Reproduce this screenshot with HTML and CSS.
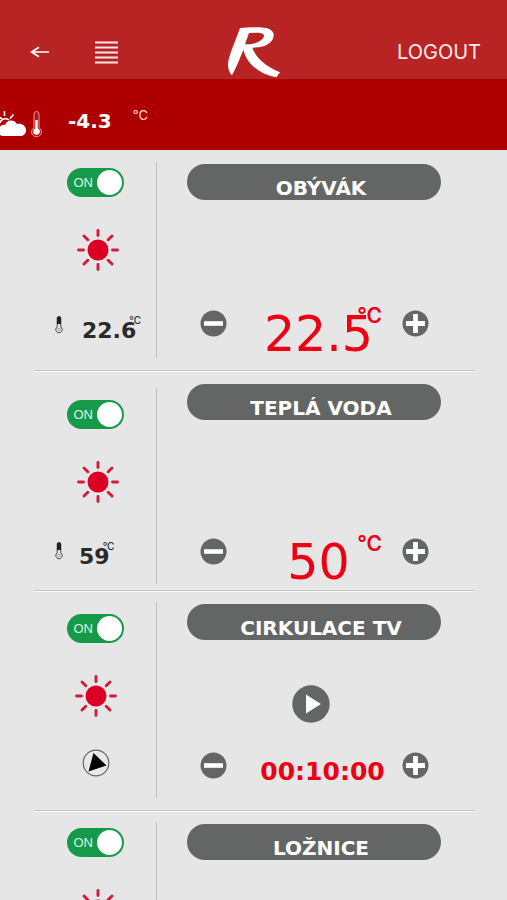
FILE: index.html
```html
<!DOCTYPE html>
<html lang="cs">
<head>
<meta charset="utf-8">
<meta name="viewport" content="width=device-width, initial-scale=1">
<title>Regulace</title>
<link rel="stylesheet" href="styles.css">
</head>
<body>
<svg class="defs" aria-hidden="true">
  <symbol id="sun" viewBox="0 0 42 42">
    <circle cx="21" cy="21" r="10.500" fill="#dc0024"/>
    <path d="M21 1.500v5M21 35.500v5M1.500 21h5M35.500 21h5M7 7l3.800 3.800M31.200 31.200l3.800 3.800M35 7l-3.800 3.800M10.800 31.200l-3.800 3.800" stroke="#d21a3a" stroke-width="2.900" stroke-linecap="round"/>
  </symbol>
  <symbol id="thermo" viewBox="0 0 8 18">
    <path d="M2.200 2.200a1.800 1.800 0 0 1 3.600 0v8.800a3.200 3.200 0 1 1-3.600 0z" fill="#e6e6e6" stroke="#444" stroke-width="1"/>
    <path d="M2 1h4v7h-4z" fill="#222"/>
    <circle cx="4" cy="13.600" r="1.300" fill="#eee" stroke="#777" stroke-width=".6"/>
  </symbol>
  <symbol id="minus" viewBox="0 0 27 27">
    <circle cx="13.500" cy="13.500" r="13" fill="#646666"/>
    <path d="M4 13.500h19" stroke="#fff" stroke-width="4.600"/>
  </symbol>
  <symbol id="plus" viewBox="0 0 27 27">
    <circle cx="13.500" cy="13.500" r="13" fill="#646666"/>
    <path d="M4 13.500h19M13.500 4v19" stroke="#fff" stroke-width="4.800"/>
  </symbol>
</svg>

<header class="topbar">
  <nav class="topbar-nav">
    <button class="icon-btn" aria-label="Zpět">
      <svg width="20" height="12" viewBox="0 0 20 12" fill="none" stroke="#fff" stroke-width="1.700"><path d="M19 6H2M9 1.200L1.500 6 9 10.800"/></svg>
    </button>
    <button class="icon-btn" aria-label="Menu">
      <svg width="23" height="23" viewBox="0 0 23 23" stroke="#ffe6e6" stroke-width="1.800"><path d="M0 1.500h23M0 6.500h23M0 11.500h23M0 16.500h23M0 21.500h23"/></svg>
    </button>
  </nav>
  <svg class="logo" width="54" height="52" viewBox="82 77 162 156" fill="#fff" role="img" aria-label="Logo">
    <path d="M121 83C142 81 172 80 192 82C213 84 223 93 222 106C220 124 203 137 176 141L158 142C167 168 190 194 241 216L230 231C178 220 141 190 131 148C122 172 111 198 97 225C87 216 83 200 86 182C94 150 108 120 121 83ZM148 98L136 132C160 133 184 126 192 111C196 101 188 97 172 97Z" fill-rule="evenodd"/>
  </svg>
  <a class="logout" href="#">LOGOUT</a>
</header>

<section class="weather">
  <svg width="44" height="28" viewBox="0 0 44 28" fill="none">
    <path d="M4.500 1v5M13.500 4.500l-3.500 4M0 7.500l2 1.500M0 13a5.500 5.500 0 0 1 9-3" stroke="#fff" stroke-width="1.600"/>
    <path d="M0 17c1-2 3-2.500 5-2 1.500-5 9-6.500 12-1 5-1 9 2 9 6s-2.500 6-6 6H4c-2 0-3.500-.5-4-1z" fill="#fff"/>
    <path d="M34 4a2.500 2.500 0 0 1 5 0v13.500a5 5 0 1 1-5 0z" fill="#b41414" stroke="#e69696" stroke-width="1"/>
    <path d="M36.500 10v11" stroke="#fff" stroke-width="2.400"/>
    <circle cx="36.500" cy="21.500" r="3.300" fill="#fff"/>
  </svg>
  <span class="outdoor">-4.3</span>
  <span class="outdoor-unit">°C</span>
</section>

<main class="zones">
  <article class="zone zone-room">
    <div class="side">
      <label class="switch"><input type="checkbox" role="switch" aria-label="Obývák" checked><span>ON</span></label>
      <svg class="sun"><use href="#sun"/></svg>
      <div class="reading"><svg class="thermo"><use href="#thermo"/></svg><span class="now">22.6</span><span class="now-unit">°C</span></div>
    </div>
    <div class="control">
      <h2 class="title">OBÝVÁK</h2>
      <div class="stepper">
        <button class="icon-btn" aria-label="Ubrat"><svg class="round"><use href="#minus"/></svg></button>
        <output class="value">22.5<span class="unit">°C</span></output>
        <button class="icon-btn" aria-label="Přidat"><svg class="round"><use href="#plus"/></svg></button>
      </div>
    </div>
  </article>

  <article class="zone zone-water">
    <div class="side">
      <label class="switch"><input type="checkbox" role="switch" aria-label="Teplá voda" checked><span>ON</span></label>
      <svg class="sun"><use href="#sun"/></svg>
      <div class="reading"><svg class="thermo"><use href="#thermo"/></svg><span class="now">59</span><span class="now-unit">°C</span></div>
    </div>
    <div class="control">
      <h2 class="title">TEPLÁ VODA</h2>
      <div class="stepper">
        <button class="icon-btn" aria-label="Ubrat"><svg class="round"><use href="#minus"/></svg></button>
        <output class="value">50<span class="unit">°C</span></output>
        <button class="icon-btn" aria-label="Přidat"><svg class="round"><use href="#plus"/></svg></button>
      </div>
    </div>
  </article>

  <article class="zone zone-pump">
    <div class="side">
      <label class="switch"><input type="checkbox" role="switch" aria-label="Cirkulace TV" checked><span>ON</span></label>
      <svg class="sun"><use href="#sun"/></svg>
      <svg class="pump" width="28" height="28" viewBox="0 0 28 28"><circle cx="14" cy="14" r="12.800" fill="#e9e9e9" stroke="#666" stroke-width="1.200"/><path d="M11.500 4L24.500 16.500L6.500 22.500Z"/></svg>
    </div>
    <div class="control">
      <h2 class="title">CIRKULACE TV</h2>
      <button class="icon-btn play" aria-label="Spustit"><svg width="38" height="38" viewBox="0 0 38 38"><circle cx="19" cy="19" r="18.700" fill="#646666"/><path d="M14 9.500L29 19L14 28.500Z" fill="#fff"/></svg></button>
      <div class="stepper">
        <button class="icon-btn" aria-label="Ubrat"><svg class="round"><use href="#minus"/></svg></button>
        <output class="value timer">00:10:00</output>
        <button class="icon-btn" aria-label="Přidat"><svg class="round"><use href="#plus"/></svg></button>
      </div>
    </div>
  </article>

  <article class="zone zone-room">
    <div class="side">
      <label class="switch"><input type="checkbox" role="switch" aria-label="Ložnice" checked><span>ON</span></label>
      <svg class="sun"><use href="#sun"/></svg>
    </div>
    <div class="control">
      <h2 class="title">LOŽNICE</h2>
    </div>
  </article>
</main>
</body>
</html>
```
FILE: styles.css
```css
* { box-sizing: border-box; }

body {
  margin: 0;
  height: 100vh;
  display: flex;
  flex-direction: column;
  background: #e6e6e6;
  font-family: "DejaVu Sans", Verdana, sans-serif;
  color: #2a2a2a;
}

svg { display: block; }
.defs { position: absolute; width: 0; height: 0; }

.icon-btn {
  display: block;
  padding: 0;
  border: 0;
  background: none;
  cursor: pointer;
}

/* top bar */
.topbar {
  flex: none;
  display: grid;
  grid-template-columns: 1fr auto 1fr;
  align-items: center;
  height: 79px;
  padding: 26px 26px 1px 30px;
  background: #b82424;
}
.topbar-nav { display: flex; align-items: center; gap: 45px; }
.logo { margin: 0 2px 0 -2px; }
.logout {
  justify-self: end;
  font: 400 20px/24px Inter, sans-serif;
  color: #ffecec;
  text-decoration: none;
}

/* outdoor temperature */
.weather {
  flex: none;
  display: flex;
  align-items: flex-start;
  height: 72px;
  padding-top: 31px;
  background: #ae0000;
  border-bottom: 1px solid #f0d8d8;
}
.outdoor { margin-left: 24px; font-size: 20px; font-weight: bold; line-height: 22px; color: #fff; }
.outdoor-unit { margin-left: 21px; font: 400 13px/10px Inter, sans-serif; color: #ffdcdc; }

/* zones */
.zones { flex: 1; min-height: 0; overflow-y: auto; scrollbar-width: none; padding: 0 33px 0 34px; }
.zone {
  display: grid;
  grid-template-columns: 123px 1fr;
  min-height: 220px;
  border-bottom: 1px solid #c4c4c4;
  box-shadow: 0 1px #fafafa;
}

.side {
  display: flex;
  flex-direction: column;
  align-items: center;
  height: 196px;
  margin-top: 11px;
  padding-top: 6px;
  border-right: 1px solid #bdbdbd;
}
.sun { flex: none; width: 42px; height: 42px; margin-top: 32px; }

.switch {
  flex: none;
  position: relative;
  display: flex;
  align-items: center;
  width: 57px;
  height: 29px;
  padding-left: 7px;
  border-radius: 15px;
  background: #159a4a;
  font: 13px/16px "Liberation Sans", Arial, sans-serif;
  color: #d8f5e2;
}
.switch input {
  appearance: none;
  position: absolute;
  inset: 0;
  margin: 0;
  cursor: pointer;
}
.switch input::before {
  content: "";
  position: absolute;
  top: 2px;
  right: 2px;
  width: 25px;
  height: 25px;
  border-radius: 50%;
  background: #fff;
}

.reading { align-self: stretch; display: flex; align-items: flex-start; margin-top: 45px; padding-left: 21px; }
.thermo { flex: none; width: 8px; height: 18px; }
.now { margin-left: 19px; font-size: 22px; font-weight: bold; line-height: 30px; }
.now-unit { margin-left: -7px; font: 500 10px/8px Inter, sans-serif; }
.pump { flex: none; margin: 32px 0 0 2px; }

.control { padding: 13px 33px 0 30px; }
.title {
  height: 36px;
  margin: 0;
  padding: 6px 0 0 14px;
  border-radius: 18px;
  background: #646666;
  color: #fff;
  font-size: 20px;
  line-height: 36px;
  text-align: center;
}
.play { margin: 45px auto 0; position: relative; right: 3px; }
.stepper { display: flex; align-items: flex-start; margin: 110px 12px 0 13px; }
.round { width: 27px; height: 27px; }
.value {
  position: relative;
  flex: 1;
  padding-left: 8px;
  font-size: 49px;
  line-height: 50px;
  text-align: center;
  color: #ee0014;
}
.unit { position: absolute; top: -6px; right: 20px; font: 600 21px/24px Inter, sans-serif; }
.timer { font-size: 25px; font-weight: bold; line-height: 40px; padding-left: 16px; }

/* per-type spacing */
.zone-room .sun, .zone-water .sun { margin-left: 5px; }
.zone-pump .sun { margin-left: 1px; }
.zone-water .side { margin-top: 17px; padding-top: 12px; }
.zone-water .reading { margin-top: 39px; }
.zone-water .now { margin-left: 16px; }
.zone-water .stepper { margin-top: 118px; }
.zone-pump .side { padding-top: 12px; }
.zone-pump .stepper { margin-top: 29px; }
```
